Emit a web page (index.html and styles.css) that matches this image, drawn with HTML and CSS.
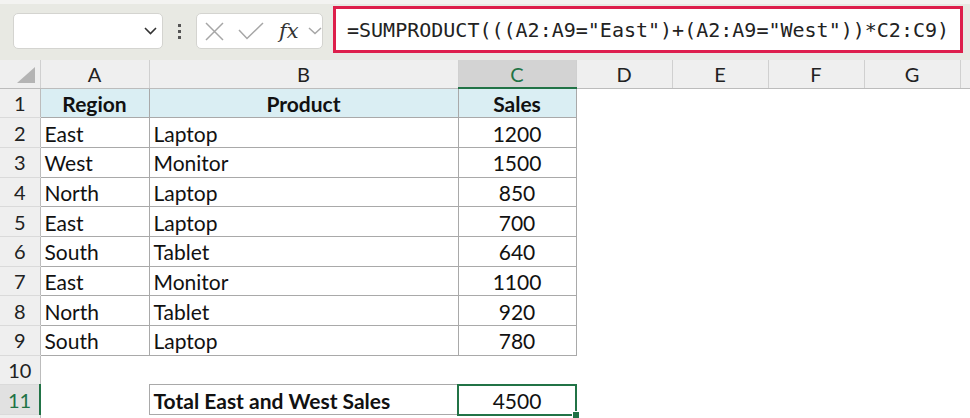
FILE: index.html
```html
<!DOCTYPE html>
<html lang="en">

<head>
  <meta charset="UTF-8" />
  <meta name="viewport" content="width=device-width, initial-scale=1.0" />
  <title>SUMPRODUCT - East and West Sales</title>
  <link rel="stylesheet" href="styles.css">
</head>

<body>

  <div class="bar">
    <div class="name-box">
      <svg class="chev" width="13" height="8" viewBox="0 0 13 8"><path d="M1 1 L6.5 6.5 L12 1" fill="none" stroke="#333" stroke-width="1.6" /></svg>
    </div>
    <div class="dots"><span></span><span></span><span></span></div>
    <div class="fx-box">
      <svg class="ico" width="19" height="19" viewBox="0 0 19 19"><path d="M1 1 L18 18 M18 1 L1 18" stroke="#a6a6a6" stroke-width="1.5" fill="none" /></svg>
      <svg class="ico" width="26" height="18" viewBox="0 0 26 18"><path d="M1 8 L9 16.5 L25 1" stroke="#a6a6a6" stroke-width="1.5" fill="none" /></svg>
      <span class="fx">fx</span>
      <svg class="chev-sm" width="14" height="8" viewBox="0 0 14 8"><path d="M1 1 L7 6.5 L13 1" fill="none" stroke="#a6a6a6" stroke-width="1.5" /></svg>
    </div>
    <div class="formula">=SUMPRODUCT(((A2:A9="East")+(A2:A9="West"))*C2:C9)</div>
  </div>

  <table class="sheet">
    <colgroup>
      <col class="w-rn">
      <col class="w-a">
      <col class="w-b">
      <col class="w-c">
      <col class="w-d">
      <col class="w-d">
      <col class="w-d">
      <col class="w-d">
      <col class="w-h">
    </colgroup>
    <tr class="heads">
      <th class="corner"><span class="tri"></span></th>
      <th>A</th>
      <th>B</th>
      <th class="on">C</th>
      <th>D</th>
      <th>E</th>
      <th>F</th>
      <th>G</th>
      <th></th>
    </tr>
    <tr>
      <th class="rn">1</th>
      <td class="cell top hd">Region</td>
      <td class="cell top hd">Product</td>
      <td class="cell top hd">Sales</td>
      <td></td><td></td><td></td><td></td><td></td>
    </tr>
    <tr>
      <th class="rn">2</th>
      <td class="cell">East</td>
      <td class="cell">Laptop</td>
      <td class="cell num">1200</td>
      <td></td><td></td><td></td><td></td><td></td>
    </tr>
    <tr>
      <th class="rn">3</th>
      <td class="cell">West</td>
      <td class="cell">Monitor</td>
      <td class="cell num">1500</td>
      <td></td><td></td><td></td><td></td><td></td>
    </tr>
    <tr>
      <th class="rn">4</th>
      <td class="cell">North</td>
      <td class="cell">Laptop</td>
      <td class="cell num">850</td>
      <td></td><td></td><td></td><td></td><td></td>
    </tr>
    <tr>
      <th class="rn">5</th>
      <td class="cell">East</td>
      <td class="cell">Laptop</td>
      <td class="cell num">700</td>
      <td></td><td></td><td></td><td></td><td></td>
    </tr>
    <tr>
      <th class="rn">6</th>
      <td class="cell">South</td>
      <td class="cell">Tablet</td>
      <td class="cell num">640</td>
      <td></td><td></td><td></td><td></td><td></td>
    </tr>
    <tr>
      <th class="rn">7</th>
      <td class="cell">East</td>
      <td class="cell">Monitor</td>
      <td class="cell num">1100</td>
      <td></td><td></td><td></td><td></td><td></td>
    </tr>
    <tr>
      <th class="rn">8</th>
      <td class="cell">North</td>
      <td class="cell">Tablet</td>
      <td class="cell num">920</td>
      <td></td><td></td><td></td><td></td><td></td>
    </tr>
    <tr>
      <th class="rn">9</th>
      <td class="cell">South</td>
      <td class="cell">Laptop</td>
      <td class="cell num">780</td>
      <td></td><td></td><td></td><td></td><td></td>
    </tr>
    <tr>
      <th class="rn">10</th>
      <td></td><td></td><td></td><td></td><td></td><td></td><td></td><td></td>
    </tr>
    <tr>
      <th class="rn on">11</th>
      <td></td>
      <td class="cell top total">Total East and West Sales</td>
      <td class="cell top num picked">4500<span class="handle"></span></td>
      <td></td><td></td><td></td><td></td><td></td>
    </tr>
    <tr>
      <th class="rn"></th>
      <td></td><td></td><td></td><td></td><td></td><td></td><td></td><td></td>
    </tr>
  </table>

</body>

</html>
```

FILE: styles.css
```css
body {
  margin: 0;
  background-color: white;
  font-family: Lato, "Liberation Sans", sans-serif;
  color: #111;
  overflow: hidden;
}

.bar {
  height: 60px;
  box-sizing: border-box;
  background-color: #e8e9e3;
  border-top: 4px solid #f3f3f1;
  padding: 9px 0 0 13px;
  display: flex;
  align-items: flex-start;
}

.name-box {
  width: 150px;
  height: 36px;
  box-sizing: border-box;
  background-color: white;
  border: 1px solid #d4d4d0;
  border-radius: 5px;
  display: flex;
  align-items: center;
  justify-content: flex-end;
  padding-right: 5px;
}

.dots {
  width: 33px;
  height: 36px;
  display: flex;
  flex-direction: column;
  align-items: center;
  justify-content: center;
  gap: 3px;
}

.dots span {
  width: 3px;
  height: 3px;
  background-color: #555;
}

.fx-box {
  width: 127px;
  height: 36px;
  box-sizing: border-box;
  background-color: white;
  border: 1px solid #d4d4d0;
  border-radius: 5px;
  display: flex;
  align-items: center;
  padding-left: 8px;
  gap: 14px;
}

.fx {
  font-family: "DejaVu Serif", "Liberation Serif", serif;
  font-style: italic;
  font-size: 21px;
  color: #333;
  margin-left: 1px;
  margin-right: -5px;
}

.formula {
  margin: -7px 0 0 10px;
  width: 630px;
  height: 47px;
  box-sizing: border-box;
  border: 3px solid #dd1f4b;
  background-color: white;
  font-family: "DejaVu Sans Mono", "Liberation Mono", monospace;
  font-size: 20px;
  color: #222;
  padding: 1px 0 0 11px;
  line-height: 41px;
  white-space: nowrap;
}

.sheet {
  table-layout: fixed;
  width: 970px;
  border-collapse: collapse;
  font-size: 21px;
}

.w-rn { width: 40px; }
.w-a { width: 109px; }
.w-b { width: 309px; }
.w-c { width: 118px; }
.w-d { width: 96px; }
.w-h { width: 10px; }

.heads {
  height: 28px;
}

.heads th {
  background-color: #efefef;
  border-right: 1px solid #d0d0d0;
  border-bottom: 1px solid #bcbcbc;
  font-weight: normal;
  font-size: 20px;
  color: #222;
  padding: 0;
}

.heads th.on {
  background-color: #d3d3d3;
  color: #217346;
  border-bottom: 2px solid #217346;
}

.corner {
  position: relative;
}

.tri {
  position: absolute;
  right: 5px;
  bottom: 5px;
  width: 0;
  height: 0;
  border-left: 18px solid transparent;
  border-bottom: 16px solid #b4b4b4;
}

tr {
  height: 29.7px;
}

.rn {
  background-color: #efefef;
  border-right: 1px solid #bcbcbc;
  border-bottom: 1px solid #dadada;
  font-weight: normal;
  font-size: 20px;
  color: #222;
  text-align: center;
  padding: 0;
}

.rn.on {
  background-color: #e1e1e1;
  color: #217346;
  border-right: 2px solid #217346;
}

td {
  padding: 1px 4px 0;
  white-space: nowrap;
  overflow: visible;
}

.cell {
  border-right: 1px solid #a9a9a9;
  border-bottom: 1px solid #a9a9a9;
  border-left: 1px solid #a9a9a9;
}

.top {
  border-top: 1px solid #a9a9a9;
}

.hd {
  background-color: #daeef3;
  font-weight: bold;
  text-align: center;
}

.num {
  text-align: center;
}

.total {
  font-weight: bold;
}

.picked {
  position: relative;
  border: 2px solid #217346;
}

.handle {
  position: absolute;
  right: -5px;
  bottom: -5px;
  width: 6px;
  height: 6px;
  background-color: #217346;
  border: 1px solid white;
}
```
